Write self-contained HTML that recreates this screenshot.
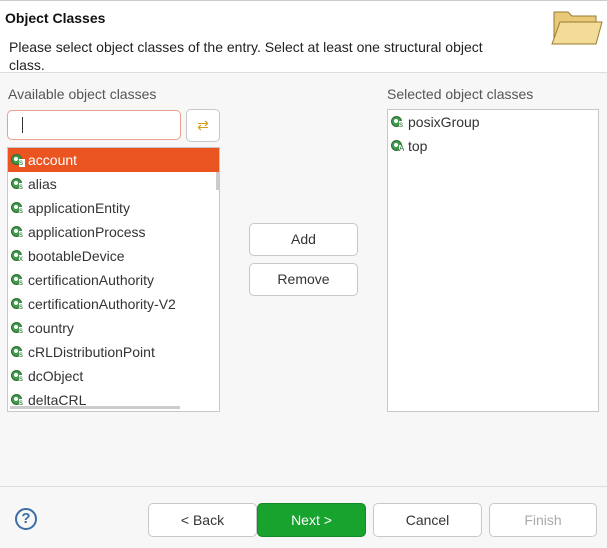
<!DOCTYPE html><html><head><style>
body{margin:0;width:607px;height:548px;background:#f7f7f7;font-family:"Liberation Sans",sans-serif;font-size:14px;color:#333;position:relative;overflow:hidden}
.a{position:absolute}
.hdr{left:0;top:0;width:607px;height:73px;background:#fff;border-bottom:1px solid #ddd;border-top:1px solid #ccc;box-sizing:border-box}
.btn{position:absolute;background:#fff;border:1px solid #c8c8c8;border-radius:5px;box-sizing:border-box;text-align:center;color:#333}
.row{height:24px;line-height:24px;padding-left:20px;position:relative;white-space:nowrap}
.ic{position:absolute;left:3px;top:6px;width:11px;height:11px;border-radius:50%;background:#3f9a4a;border:1px solid #2a6e33;box-sizing:border-box}
.ic:after{content:"";position:absolute;left:2px;top:2px;width:4px;height:4px;border-radius:50%;background:#fff}
.ic i{position:absolute;left:7px;top:4px;width:6px;height:8px;background:#fff;font-style:normal;font-size:8px;line-height:8px;color:#2a6e33}
</style></head><body>
<div class="a hdr"></div>
<div class="a" style="left:5px;top:10px;font-weight:bold;font-size:14px;color:#111">Object Classes</div>
<div class="a" style="left:9px;top:38px;width:505px;line-height:18px;color:#222">Please select object classes of the entry. Select at least one structural object class.</div>
<svg class="a" style="left:548px;top:6px" width="56" height="44"><path d="M6 6h14l4 4h24v26H6z" fill="#e8c97a" stroke="#9a7a30"/><path d="M12 16h42l-6 22H4z" fill="#f3dc98" stroke="#9a7a30"/></svg>
<div class="a" style="left:8px;top:86px;color:#555">Available object classes</div>
<div class="a" style="left:387px;top:86px;color:#555">Selected object classes</div>
<div class="a" style="left:7px;top:110px;width:174px;height:30px;border:1px solid #e8a090;border-radius:5px;background:#fff;box-sizing:border-box"><div style="position:absolute;left:14px;top:6px;width:1px;height:16px;background:#333"></div></div>
<div class="btn" style="left:186px;top:109px;width:34px;height:33px;color:#d4a020;line-height:31px">⇄</div>
<div class="a" style="left:7px;top:147px;width:213px;height:265px;background:#fff;border:1px solid #c8c8c8;box-sizing:border-box;overflow:hidden">
<div class="row" style="background:#e95420;color:#fff"><span class="ic"><i>s</i></span>account</div>
<div class="row"><span class="ic"><i>s</i></span>alias</div>
<div class="row"><span class="ic"><i>s</i></span>applicationEntity</div>
<div class="row"><span class="ic"><i>s</i></span>applicationProcess</div>
<div class="row"><span class="ic"><i>x</i></span>bootableDevice</div>
<div class="row"><span class="ic"><i>s</i></span>certificationAuthority</div>
<div class="row"><span class="ic"><i>s</i></span>certificationAuthority-V2</div>
<div class="row"><span class="ic"><i>s</i></span>country</div>
<div class="row"><span class="ic"><i>s</i></span>cRLDistributionPoint</div>
<div class="row"><span class="ic"><i>s</i></span>dcObject</div>
<div class="row"><span class="ic"><i>s</i></span>deltaCRL</div>
<div style="position:absolute;left:208px;top:24px;width:3px;height:18px;background:#ccc"></div>
<div style="position:absolute;left:2px;bottom:2px;width:170px;height:3px;background:#ccc"></div>
</div>
<div class="btn" style="left:249px;top:223px;width:109px;height:33px;line-height:31px">Add</div>
<div class="btn" style="left:249px;top:263px;width:109px;height:33px;line-height:31px">Remove</div>
<div class="a" style="left:387px;top:109px;width:212px;height:303px;background:#fff;border:1px solid #c8c8c8;box-sizing:border-box">
<div class="row"><span class="ic"><i>s</i></span>posixGroup</div>
<div class="row"><span class="ic"><i>A</i></span>top</div>
</div>
<div class="a" style="left:0;top:486px;width:607px;height:1px;background:#ddd"></div>
<div class="a" style="left:15px;top:508px;width:18px;height:18px;border:2px solid #3a6ea5;border-radius:50%;color:#3a6ea5;font-weight:bold;text-align:center;line-height:18px;font-size:15px">?</div>
<div class="btn" style="left:148px;top:503px;width:109px;height:34px;line-height:32px">&lt; Back</div>
<div class="btn" style="left:257px;top:503px;width:109px;height:34px;line-height:32px;background:#18a22e;border-color:#138a26;color:#fff">Next &gt;</div>
<div class="btn" style="left:373px;top:503px;width:109px;height:34px;line-height:32px">Cancel</div>
<div class="btn" style="left:489px;top:503px;width:108px;height:34px;line-height:32px;color:#aaa">Finish</div>
</body></html>
